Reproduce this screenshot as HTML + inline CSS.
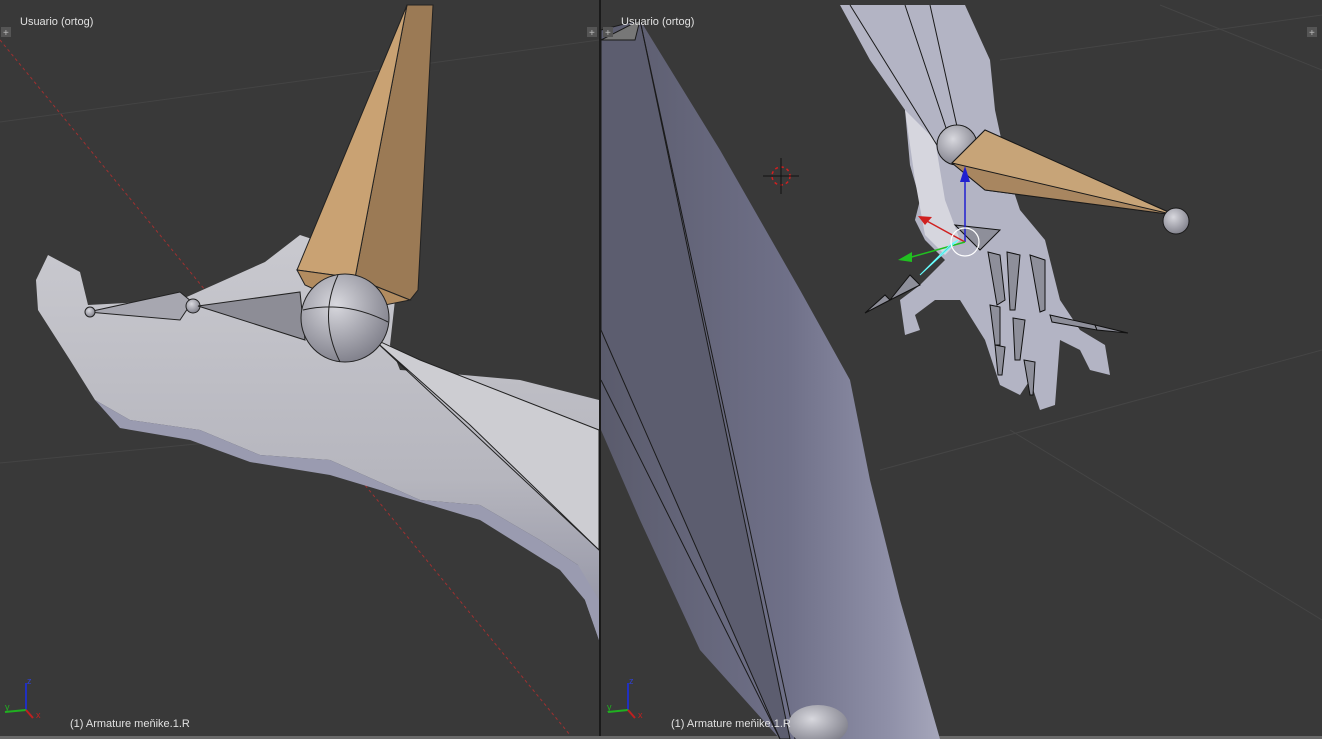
<!DOCTYPE html>
<html><head><meta charset="utf-8"><style>
html,body{margin:0;padding:0;background:#393939;overflow:hidden}
svg{display:block}
text{font-family:"Liberation Sans",sans-serif}
</style></head><body>
<svg width="1322" height="739" viewBox="0 0 1322 739" xmlns="http://www.w3.org/2000/svg">
<defs>
<linearGradient id="arm" x1="0" y1="0" x2="1" y2="0">
<stop offset="0" stop-color="#5a5b6c"/><stop offset="0.55" stop-color="#6f7088"/><stop offset="0.85" stop-color="#8f90a8"/><stop offset="1" stop-color="#a6a7bb"/>
</linearGradient>
<linearGradient id="handL" x1="0" y1="0" x2="0" y2="1">
<stop offset="0" stop-color="#c9c9cf"/><stop offset="0.6" stop-color="#b6b6be"/><stop offset="1" stop-color="#8f90a2"/>
</linearGradient>
<radialGradient id="ball" cx="0.4" cy="0.35" r="0.7">
<stop offset="0" stop-color="#d8d8de"/><stop offset="1" stop-color="#7d7d88"/>
</radialGradient>
</defs>
<rect width="1322" height="739" fill="#393939"/>
<!-- LEFT VIEWPORT -->
<g>
<line x1="0" y1="122" x2="599" y2="40" stroke="#444" stroke-width="1"/>
<line x1="0" y1="463" x2="599" y2="405" stroke="#444" stroke-width="1"/>
<line x1="0" y1="40" x2="570" y2="735" stroke="#a03030" stroke-width="1" stroke-dasharray="3,3"/>
<!-- hand mesh -->
<path d="M48,255 L80,272 L88,305 L180,300 L265,262 L300,235 L330,245 L395,300 L390,345 L400,370 L430,372 L520,380 L599,400 L599,640 L585,600 L578,565 L540,540 L480,505 L420,500 L330,460 L260,455 L200,430 L130,420 L95,400 L70,360 L38,310 L36,280 Z" fill="url(#handL)"/>
<path d="M95,400 L130,420 L200,430 L260,455 L330,460 L420,500 L480,505 L540,540 L578,565 L599,600 L599,640 L585,600 L560,570 L480,520 L330,475 L250,462 L190,440 L120,428 Z" fill="#9a9bb0"/>
<path d="M372,338 L420,360 L599,430 L599,550 L470,425 Z" fill="#cdcdd2" stroke="#222" stroke-width="1"/>
<path d="M372,338 L599,550 L599,430" fill="none" stroke="#222"/>
<!-- small bones -->
<path d="M88,312 L180,292 L192,302 L180,320 Z" fill="#a7a7b0" stroke="#222"/>
<circle cx="90" cy="312" r="5" fill="url(#ball)" stroke="#222"/>
<circle cx="193" cy="306" r="7" fill="url(#ball)" stroke="#222"/>
<path d="M198,306 L300,292 L305,340 Z" fill="#8d8d96" stroke="#222"/>
<!-- orange bone -->
<path d="M407,5 L433,5 L418,290 L410,300 L355,278 Z" fill="#9b7a55" stroke="#222"/>
<path d="M407,5 L355,278 L297,270 Z" fill="#c9a273" stroke="#222"/>
<path d="M297,270 L355,278 L410,300 L360,310 L305,285 Z" fill="#b28c60" stroke="#222"/>
<circle cx="345" cy="318" r="44" fill="url(#ball)" stroke="#222"/>
<path d="M303,310 Q345,300 388,322 M338,275 Q318,318 340,362" fill="none" stroke="#222"/>
<!-- axes -->
<line x1="26" y1="710" x2="26" y2="683" stroke="#2030c0" stroke-width="2"/>
<line x1="26" y1="710" x2="5" y2="712" stroke="#20b020" stroke-width="2"/>
<line x1="26" y1="710" x2="33" y2="718" stroke="#c02020" stroke-width="2"/>
<text x="27" y="684" font-size="9" fill="#3040d0">z</text>
<text x="5" y="710" font-size="9" fill="#20b020">y</text>
<text x="36" y="718" font-size="9" fill="#c02020">x</text>
<text x="20" y="25" font-size="11" fill="#e0e0e0">Usuario (ortog)</text>
<text x="70" y="727" font-size="11" fill="#e0e0e0">(1) Armature meňike.1.R</text>
<rect x="1" y="27" width="10" height="10" fill="#555"/><text x="3" y="36" font-size="10" fill="#bbb">+</text>
<rect x="587" y="27" width="10" height="10" fill="#555"/><text x="589" y="36" font-size="10" fill="#bbb">+</text>
</g>
<rect x="599" y="0" width="2" height="739" fill="#1a1a1a"/>
<rect x="0" y="736" width="1322" height="3" fill="#6a6a6a"/>
<!-- RIGHT VIEWPORT -->
<g>
<line x1="1160" y1="5" x2="1322" y2="70" stroke="#454545"/>
<line x1="1010" y1="430" x2="1322" y2="620" stroke="#454545"/>
<line x1="880" y1="470" x2="1322" y2="350" stroke="#454545"/>
<line x1="1000" y1="60" x2="1322" y2="15" stroke="#454545"/>
<!-- big arm -->
<path d="M601,30 L640,20 L720,150 L800,290 L850,380 L870,480 L900,600 L940,739 L780,739 L700,650 L640,520 L601,430 Z" fill="url(#arm)"/>
<path d="M601,30 L640,20 L790,739 L780,739 L601,330 Z" fill="#5c5d6f" stroke="#1a1a1a" stroke-width="1"/>
<path d="M640,20 L795,739" stroke="#1a1a1a"/>
<path d="M601,380 L780,739 M601,40 L640,20 L635,40 Z" stroke="#1a1a1a" fill="#777"/>
<ellipse cx="818" cy="725" rx="30" ry="20" fill="url(#ball)"/>
<!-- hand -->
<path d="M840,5 L965,5 L990,60 L995,110 L1010,180 L1020,210 L1045,240 L1060,300 L1080,330 L1105,345 L1110,375 L1090,370 L1080,350 L1060,340 L1055,405 L1040,410 L1030,380 L1020,395 L1000,385 L985,340 L960,300 L935,300 L915,315 L920,330 L905,335 L900,300 L920,285 L945,260 L925,240 L915,220 L920,200 L910,165 L905,110 L870,60 Z" fill="#b3b4c4"/>
<path d="M905,110 L915,180 L925,235 L945,255 L960,240 L945,200 L935,140 Z" fill="#d6d6de"/>
<path d="M850,5 L940,150 M905,5 L950,140 M930,5 L960,140" stroke="#1a1a1a" fill="none"/>
<circle cx="957" cy="145" r="20" fill="url(#ball)" stroke="#1a1a1a"/>
<path d="M952,163 L1175,215 L985,130 Z" fill="#9d7c58" stroke="#1a1a1a"/>
<path d="M952,163 L985,130 L1175,215 L985,190 Z" fill="#c7a478" stroke="#1a1a1a"/>
<path d="M985,190 L1175,215 L952,163 Z" fill="#a88660" stroke="#1a1a1a"/>
<circle cx="1176" cy="221" r="13" fill="url(#ball)" stroke="#1a1a1a"/>
<!-- finger bones -->
<g fill="#8e8f9a" stroke="#111" stroke-width="1">
<path d="M988,252 L1000,255 L1005,300 L997,305 Z"/>
<path d="M1007,252 L1020,255 L1015,310 L1010,310 Z"/>
<path d="M1030,255 L1045,260 L1045,310 L1040,312 Z"/>
<path d="M990,305 L1000,307 L1000,345 L995,345 Z"/>
<path d="M1013,318 L1025,320 L1020,360 L1015,360 Z"/>
<path d="M995,345 L1005,347 L1002,375 L998,375 Z"/>
<path d="M1024,360 L1035,362 L1033,395 L1030,395 Z"/>
<path d="M1050,315 L1095,325 L1097,330 L1052,322 Z"/>
<path d="M1095,325 L1128,333 L1097,330 Z"/>
<path d="M910,275 L920,285 L890,300 Z"/>
<path d="M890,300 L865,313 L885,295 Z"/>
<path d="M955,225 L1000,230 L980,250 Z"/>
</g>
<!-- gizmo -->
<line x1="965" y1="242" x2="965" y2="180" stroke="#2020d0" stroke-width="1.5"/>
<path d="M960,182 L965,166 L970,182 Z" fill="#2020d0"/>
<line x1="965" y1="242" x2="925" y2="220" stroke="#d02020" stroke-width="1.5"/>
<path d="M918,216 L932,217 L925,225 Z" fill="#d02020"/>
<line x1="965" y1="242" x2="908" y2="258" stroke="#20c020" stroke-width="1.5"/>
<path d="M898,260 L912,252 L912,262 Z" fill="#20c020"/>
<path d="M958,240 L920,275 L950,245 Z" fill="#6aa" stroke="#6ff"/>
<circle cx="965" cy="242" r="14" fill="none" stroke="#fff" stroke-width="1.2"/>
<!-- cursor -->
<circle cx="781" cy="176" r="9" fill="none" stroke="#d02020" stroke-dasharray="3,3" stroke-width="1.5"/>
<line x1="763" y1="176" x2="799" y2="176" stroke="#111"/><line x1="781" y1="158" x2="781" y2="194" stroke="#111"/>
<!-- axes -->
<line x1="628" y1="710" x2="628" y2="683" stroke="#2030c0" stroke-width="2"/>
<line x1="628" y1="710" x2="608" y2="712" stroke="#20b020" stroke-width="2"/>
<line x1="628" y1="710" x2="635" y2="718" stroke="#c02020" stroke-width="2"/>
<text x="629" y="684" font-size="9" fill="#3040d0">z</text>
<text x="607" y="710" font-size="9" fill="#20b020">y</text>
<text x="638" y="718" font-size="9" fill="#c02020">x</text>
<text x="621" y="25" font-size="11" fill="#e0e0e0">Usuario (ortog)</text>
<text x="671" y="727" font-size="11" fill="#e0e0e0">(1) Armature meňike.1.R</text>
<rect x="603" y="27" width="10" height="10" fill="#555"/><text x="605" y="36" font-size="10" fill="#bbb">+</text>
<rect x="1307" y="27" width="10" height="10" fill="#555"/><text x="1309" y="36" font-size="10" fill="#bbb">+</text>
</g>
</svg>
</body></html>
